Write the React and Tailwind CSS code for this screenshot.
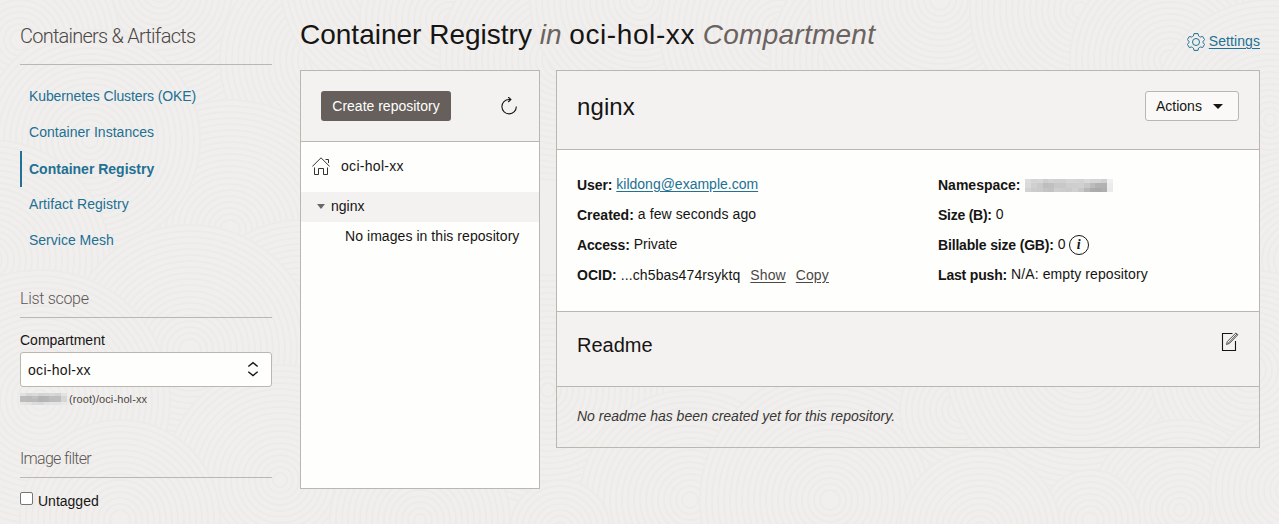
const RINGS = [
  [160, -10, 150], [20, 40, 100], [330, 60, 110], [230, 230, 130], [90, 140, 110],
  [400, -20, 120], [-10, 260, 120], [300, 330, 110], [190, 350, 125], [40, 400, 130],
  [450, 20, 90], [560, 60, 120], [280, 480, 115], [120, 520, 100], [640, 0, 110],
  [548, 390, 115], [780, 30, 120], [690, 500, 110], [880, 60, 110], [940, 0, 130],
  [830, 500, 130], [1080, 10, 110], [1170, 60, 100], [960, 410, 60], [1080, 360, 135],
  [1270, 120, 120], [1300, 260, 110], [1250, 370, 100], [1180, 510, 90], [1090, 520, 50],
  [980, 530, 80], [1290, 490, 80], [420, 520, 90], [560, 530, 50],
];

function Backdrop() {
  return (
    <svg className="absolute inset-0 -z-10 h-full w-full" viewBox="0 0 1279 524" preserveAspectRatio="none" aria-hidden="true">
      <rect width="1279" height="524" fill="#f1efed" />
      {RINGS.map(([x, y, r]) => (
        <g key={`${x}-${y}`}>
          <circle cx={x} cy={y} r={r} fill="#f1efed" />
          {Array.from({ length: Math.floor(r / 6) }, (_, i) => (
            <circle key={i} cx={x} cy={y} r={r - i * 6} fill="none" stroke="#edebe9" strokeWidth="2" />
          ))}
        </g>
      ))}
    </svg>
  );
}

const NAV = [
  { label: "Kubernetes Clusters (OKE)", cls: "tracking-[-0.1px]" },
  { label: "Container Instances", cls: "tracking-[0.03px]" },
  { label: "Container Registry", cls: "font-bold", active: true },
  { label: "Artifact Registry", cls: "tracking-[0.06px]" },
  { label: "Service Mesh", cls: "" },
];

function Redacted({ cells, className }) {
  return (
    <svg className={className} viewBox={`0 0 ${cells[0].length} ${cells.length}`} preserveAspectRatio="none" shapeRendering="crispEdges" aria-hidden="true">
      {cells.map((row, y) =>
        row.map((v, x) => <rect key={`${x}-${y}`} x={x} y={y} width="1" height="1" fill={`rgb(${v},${v},${v})`} />)
      )}
    </svg>
  );
}

function Field({ label, labelClass = "", children }) {
  return (
    <div className="flex h-[30px] items-center whitespace-nowrap">
      <span className={`mr-1 font-bold ${labelClass}`}>{label}</span>
      {children}
    </div>
  );
}

export default function App() {
  return (
    <div className="relative isolate flex h-[524px] w-[1279px] overflow-hidden font-['Liberation_Sans',Arial,sans-serif] text-[14px] leading-5 text-[#161513]">
      <Backdrop />
      <aside className="ml-5 w-[252px] shrink-0">
        <h2 className="h-[65px] border-b border-[#bcb6b1] pt-6 font-['Roboto',sans-serif] text-[20px] leading-6 font-light tracking-[-0.76px] whitespace-nowrap text-[#4b4845]">Containers &amp; Artifacts</h2>
        <nav className="mt-[13px] flex flex-col text-[#227093]">
          {NAV.map((n) => (
            <a key={n.label} className={`flex h-9 items-center whitespace-nowrap ${n.active ? "mt-px -mb-px border-l-2 border-[#227093] pl-[7px]" : "pl-[9px]"}`}>
              <span className={n.cls}>{n.label}</span>
            </a>
          ))}
        </nav>
        <h3 className="mt-[30px] h-[30px] border-b border-[#bcb6b1] pt-px font-['Roboto',sans-serif] text-[16px] font-light tracking-[-0.3px] text-[#5b5754]">List scope</h3>
        <div className="mt-3">Compartment</div>
        <div className="mt-[2px] flex h-[35px] items-center justify-between rounded-[3px] border border-[#bcb6b1] bg-[#fefefd] pr-3 pl-[7px]">
          <span className="tracking-[0.3px]">oci-hol-xx</span>
          <svg className="mb-[2px] h-4 w-3" viewBox="0 0 12 16" fill="none" stroke="#161513" strokeWidth="1.4"><path d="M1.300 5.500 6 1.700l4.700 3.800M1.300 10.700 6 14.500l4.700-3.800" /></svg>
        </div>
        <div className="mt-1 flex h-4 items-center text-[11px] tracking-[0.1px] text-[#4b4845]">
          <Redacted className="mr-[2px] h-3 w-[47px]" cells={[[225, 215, 218, 212, 214, 216, 212, 226], [188, 186, 192, 180, 182, 190, 190, 214], [188, 186, 186, 180, 182, 188, 190, 214], [229, 226, 220, 218, 226, 228, 228, 232]]} />
          (root)/oci-hol-xx
        </div>
        <h3 className="mt-[41px] h-[30px] border-b border-[#bcb6b1] pt-px font-['Roboto',sans-serif] text-[16px] font-light tracking-[-0.7px] text-[#5b5754]">Image filter</h3>
        <label className="mt-[13px] flex items-center gap-[5px]">
          <span className="-mt-[5px] h-[13px] w-[13px] rounded-[2px] border border-[#767676] bg-white" />
          Untagged
        </label>
      </aside>
      <main className="ml-7 w-[960px] shrink-0">
        <header className="flex h-[70px] justify-between">
          <h1 className="pt-[19px] text-[28px] leading-8 whitespace-nowrap">
            Container Registry <em className="text-[#6b6360]">in</em> <span className="tracking-[0.6px]">oci-hol-xx</span> <em className="tracking-[0.25px] text-[#6b6360]">Compartment</em>
          </h1>
          <a className="mt-[31px] flex h-5 items-center gap-1 text-[#227093]">
            <svg className="mt-[2px] h-[18px] w-[18px]" viewBox="0 0 18 18" fill="none" stroke="currentColor"><circle cx="9" cy="9" r="3.500" /><path d="M7 .6h4l.6 2.300q1 .8 1.900 1.100l2.200-.5 1.900 3.100-1.500 1.700q-.3.700 0 1.400l1.500 1.700-1.900 3.100-2.200-.5q-.9.300-1.900 1.100l-.6 2.300H7l-.6-2.300q-1-.8-1.900-1.100l-2.200.5-1.900-3.100 1.500-1.700q.3-.7 0-1.400L.4 6.600l1.900-3.100 2.200.5q.9-.3 1.900-1.100z" strokeLinejoin="round" /></svg>
            <span className="tracking-[0.08px] underline underline-offset-2">Settings</span>
          </a>
        </header>
        <div className="flex items-start gap-4">
          <section className="h-[419px] w-[240px] border border-[#bcb6b1] bg-[#fefefd]">
            <div className="flex h-[71px] items-center justify-between border-b border-[#bcb6b1] bg-[#f4f2f1] pr-[21px] pl-5">
              <button className="h-[30px] w-[130px] rounded-[3px] bg-[#665f5b] whitespace-nowrap text-white">Create repository</button>
              <svg className="h-[18px] w-[18px]" viewBox="0 0 18 18" fill="none" stroke="#161513" strokeWidth="1.1"><path d="M10.500 2.500H9A7.200 7.200 0 1 0 16.300 9.500M8.200 0l2.700 2.500L8.200 5" /></svg>
            </div>
            <div className="flex h-[50px] items-center pb-[2px] pl-[11px]">
              <svg className="-mt-px mr-[11px] h-[18px] w-[18px]" viewBox="0 0 18 18" fill="none" stroke="#2b2926" strokeWidth=".95"><path d="M.3 9.500 9 .8l8.700 8.700M13.500 2.500h3V6M2.500 10.500v7h4v-6h5v6h4v-7" /></svg>
              <span className="tracking-[0.3px]">oci-hol-xx</span>
            </div>
            <div className="flex h-[30px] items-center bg-[#f4f2f1] pb-[2px] pl-4">
              <svg className="mt-px mr-[6px] h-[5px] w-2" viewBox="0 0 8 5"><path d="M0 0h8L4 5z" fill="#6b6763" /></svg>
              nginx
            </div>
            <div className="flex h-[30px] items-center pb-[2px] pl-11 tracking-[0.06px] whitespace-nowrap">No images in this repository</div>
          </section>
          <section className="w-[704px] border border-[#bcb6b1]">
            <div className="flex h-[79px] items-start justify-between border-b border-[#bcb6b1] bg-[#f4f2f1] p-5">
              <h2 className="text-[24px] leading-8 tracking-[0.1px]">nginx</h2>
              <button className="flex h-[30px] w-[94px] items-center gap-[11px] rounded-[3px] border border-[#bcb6b1] bg-[#faf9f8] pl-[10px]">
                Actions
                <svg className="h-[5px] w-[10px]" viewBox="0 0 10 5"><path d="M0 0h10L5 5z" fill="#161513" /></svg>
              </button>
            </div>
            <div className="flex h-[162px] border-b border-[#bcb6b1] bg-[#fefefd] px-5 pt-5">
              <div className="w-[361px]">
                <Field label="User:" labelClass="tracking-[-0.1px]"><a className="pb-[2px] text-[#227093] underline underline-offset-2">kildong@example.com</a></Field>
                <Field label="Created:"><span className="pb-[2px] tracking-[0.1px]">a few seconds ago</span></Field>
                <Field label="Access:" labelClass="tracking-[-0.15px]"><span className="pb-[2px]">Private</span></Field>
                <Field label="OCID:"><span className="tracking-[0.12px]">...ch5bas474rsyktq</span><a className="ml-[10px] tracking-[0.1px] text-[#4b4845] underline underline-offset-2">Show</a><a className="ml-[10px] tracking-[0.1px] text-[#4b4845] underline underline-offset-2">Copy</a></Field>
              </div>
              <div>
                <Field label="Namespace:"><Redacted className="h-[13px] w-[88px]" cells={[[220, 212, 214, 205, 210, 208, 208, 214, 213, 211, 218, 214, 214, 208, 240], [218, 208, 202, 190, 192, 200, 200, 206, 206, 208, 200, 188, 178, 178, 236], [210, 204, 202, 196, 194, 206, 204, 202, 208, 200, 184, 172, 170, 174, 234]]} /></Field>
                <Field label="Size (B):" labelClass="tracking-[-0.25px]"><span className="pb-[2px]">0</span></Field>
                <Field label="Billable size (GB):" labelClass="tracking-[-0.17px]"><span className="pb-[2px]">0</span>
                  <span className="ml-[3px] flex h-5 w-5 items-center justify-center rounded-full border border-[#161513] font-['Liberation_Serif',serif] text-[14px] font-bold italic">i</span>
                </Field>
                <Field label="Last push:" labelClass="tracking-[-0.17px]"><span className="pb-[2px] tracking-[0.1px]">N/A: empty repository</span></Field>
              </div>
            </div>
            <div className="flex h-[75px] items-start justify-between border-b border-[#bcb6b1] bg-[#f4f2f1] px-5 pt-[19px]">
              <h2 className="text-[20px] leading-7">Readme</h2>
              <svg className="mt-px h-5 w-[18px]" viewBox="0 0 18 20" fill="none" stroke="#161513"><path d="M11.500 1.500h-10v17h13V9" strokeWidth="1.100" /><path d="m5.500 12.500.8-3L15 .9l1.900 1.900L8.500 11.400zM7 11.500 16 2" stroke="#454340" strokeWidth=".9" /></svg>
            </div>
            <div className="flex h-[60px] items-center pb-[2px] pl-5 text-[#393735] italic">No readme has been created yet for this repository.</div>
          </section>
        </div>
      </main>
    </div>
  );
}
